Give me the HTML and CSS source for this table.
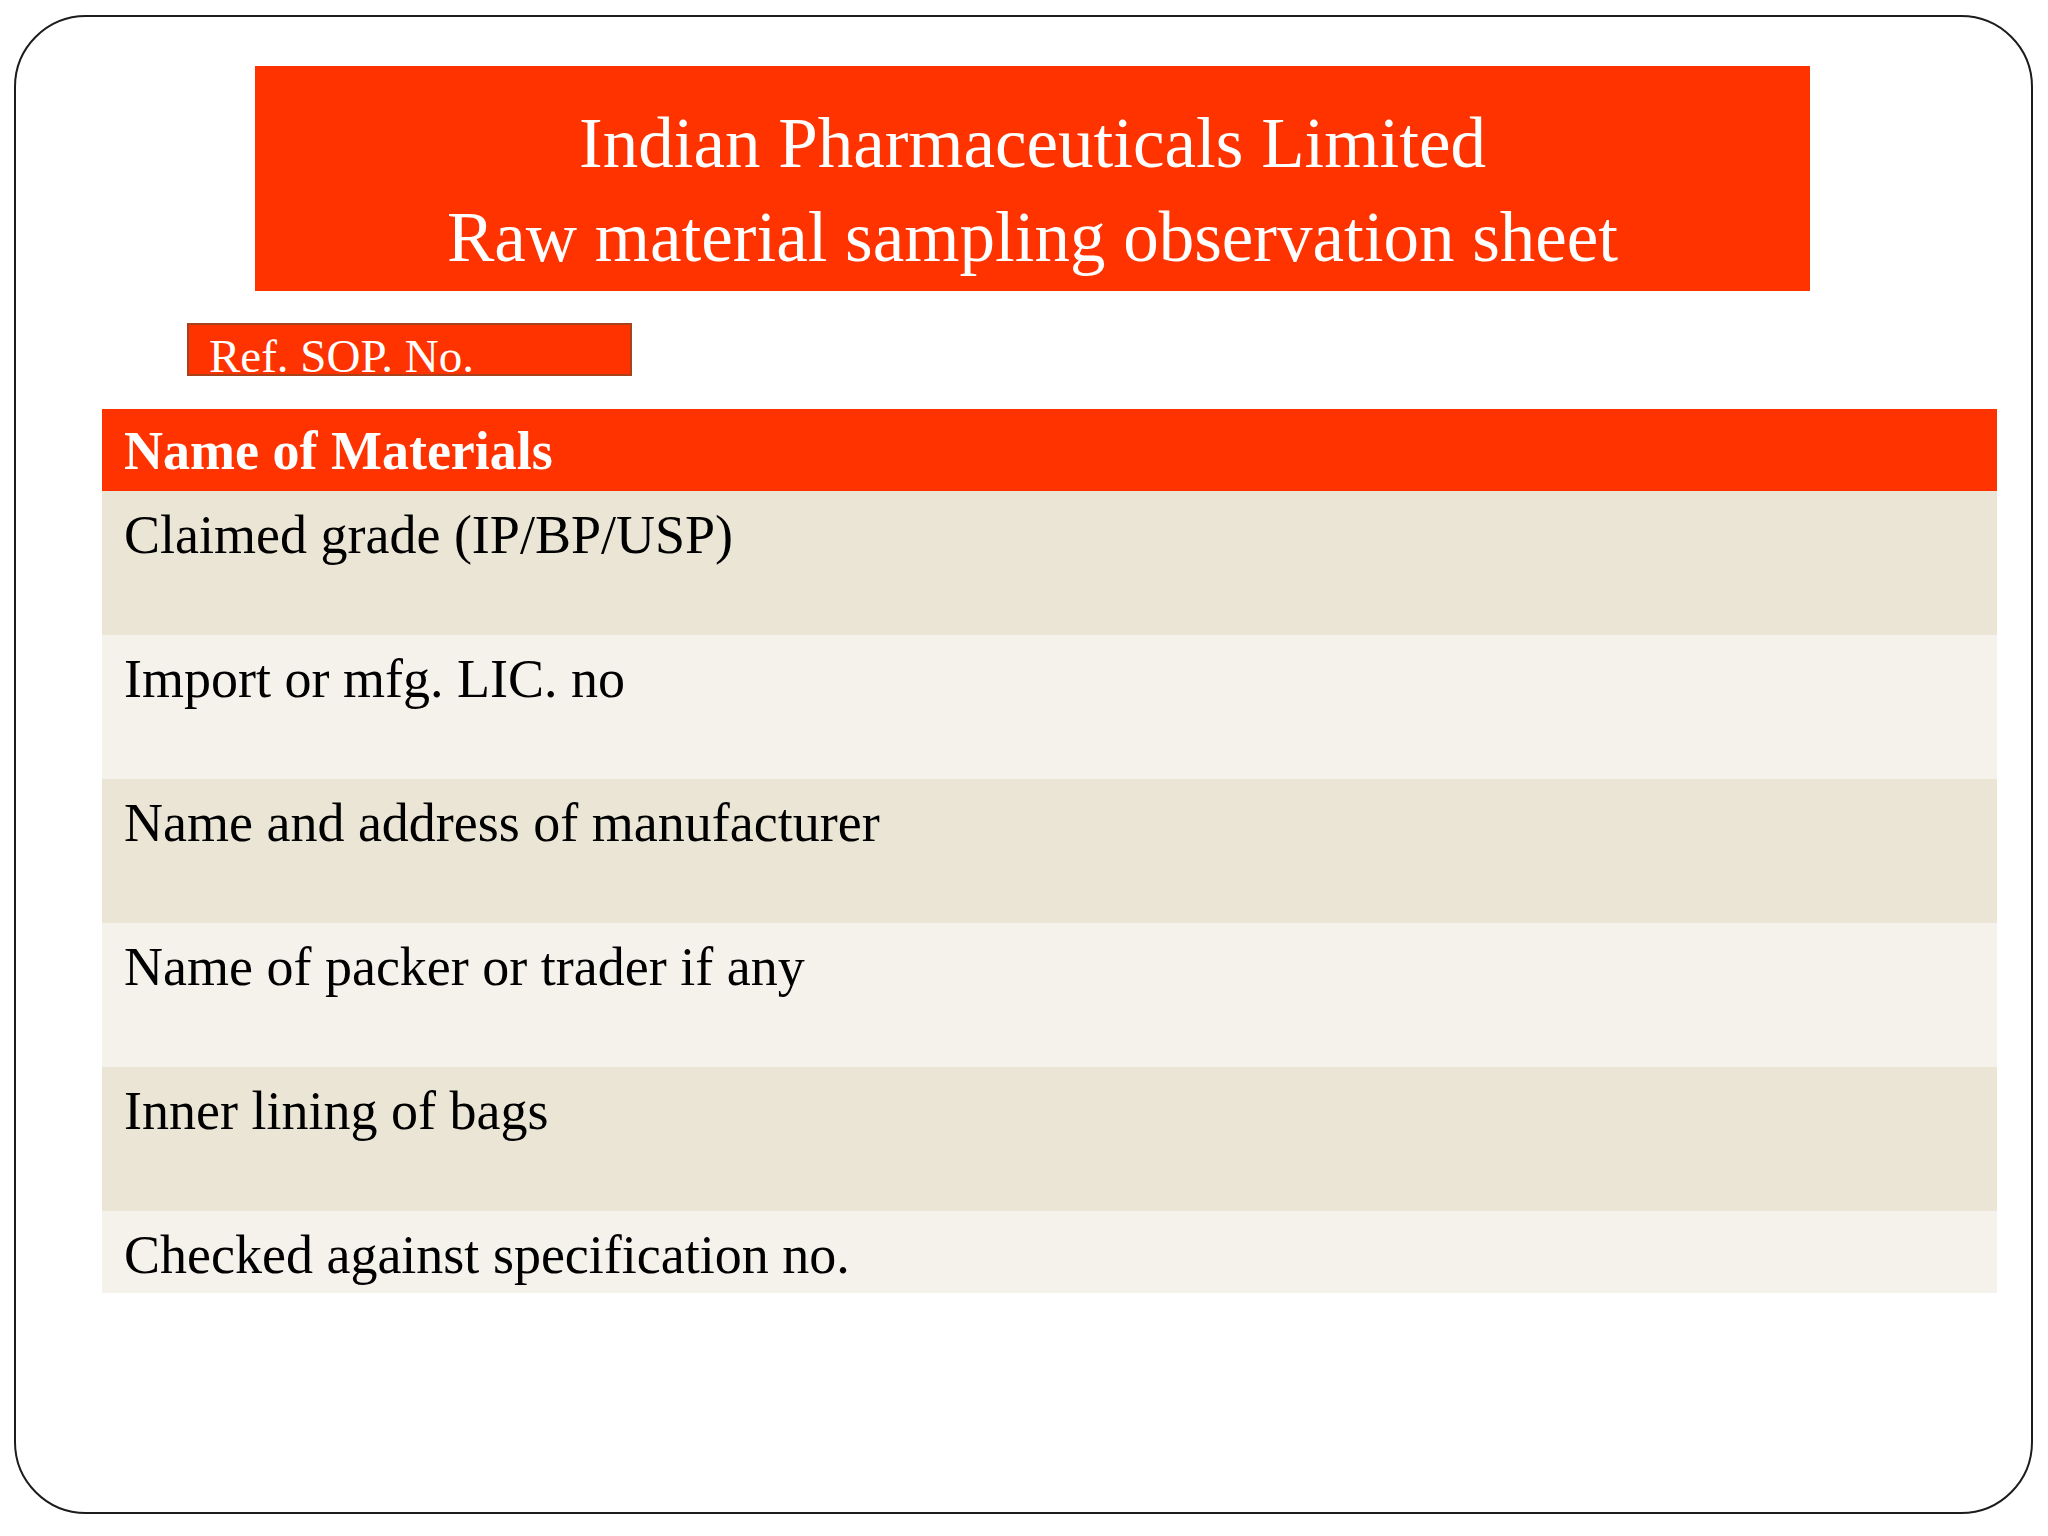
FILE: index.html
```html
<!DOCTYPE html>
<html lang="en">
<head>
<meta charset="utf-8">
<title>Raw material sampling observation sheet</title>
<link rel="stylesheet" href="styles.css">
</head>
<body>
<div class="slide">
  <div class="title">
    <div class="title-line">Indian Pharmaceuticals Limited</div>
    <div class="title-line">Raw material sampling observation sheet</div>
  </div>
  <div class="sop">Ref. SOP. No.</div>
  <div class="table">
    <div class="row head">Name of Materials</div>
    <div class="row odd">Claimed grade (IP/BP/USP)</div>
    <div class="row even">Import or mfg. LIC. no</div>
    <div class="row odd">Name and address of manufacturer</div>
    <div class="row even">Name of packer or trader if any</div>
    <div class="row odd">Inner lining of bags</div>
    <div class="row even last">Checked against specification no.</div>
  </div>
</div>
</body>
</html>
```
FILE: styles.css
```css
html, body {
  margin: 0;
  padding: 0;
  background: #ffffff;
}
body {
  font-family: "Liberation Serif", "Times New Roman", serif;
}
.slide {
  box-sizing: border-box;
  margin: 15px 0 0 14px;
  width: 2019px;
  height: 1499px;
  border: 2px solid #1c1c1c;
  border-radius: 72px;
  display: flex;
  flex-direction: column;
  align-items: flex-start;
  background: #ffffff;
}
.title {
  box-sizing: border-box;
  margin: 49px 0 0 239px;
  width: 1555px;
  height: 225px;
  padding-top: 30px;
  background: #ff3300;
  color: #ffffff;
  text-align: center;
  font-size: 71px;
  line-height: 94px;
}
.sop {
  box-sizing: border-box;
  margin: 32px 0 0 171px;
  width: 445px;
  height: 53px;
  padding: 4px 0 0 20px;
  background: #ff3300;
  border: 2px solid #a8421c;
  color: #ffffff;
  font-size: 47px;
  line-height: normal;
  white-space: nowrap;
}
.table {
  margin: 33px 0 0 86px;
  width: 1895px;
  display: flex;
  flex-direction: column;
}
.row {
  box-sizing: border-box;
  height: 144px;
  padding: 13px 0 0 22px;
  font-size: 54px;
  line-height: normal;
  color: #000000;
  white-space: nowrap;
}
.head {
  height: 82px;
  padding-top: 11px;
  background: #ff3300;
  color: #ffffff;
  font-weight: bold;
}
.odd {
  background: #ebe5d6;
}
.even {
  background: #f5f2ec;
}
.last {
  height: 82px;
}
```
